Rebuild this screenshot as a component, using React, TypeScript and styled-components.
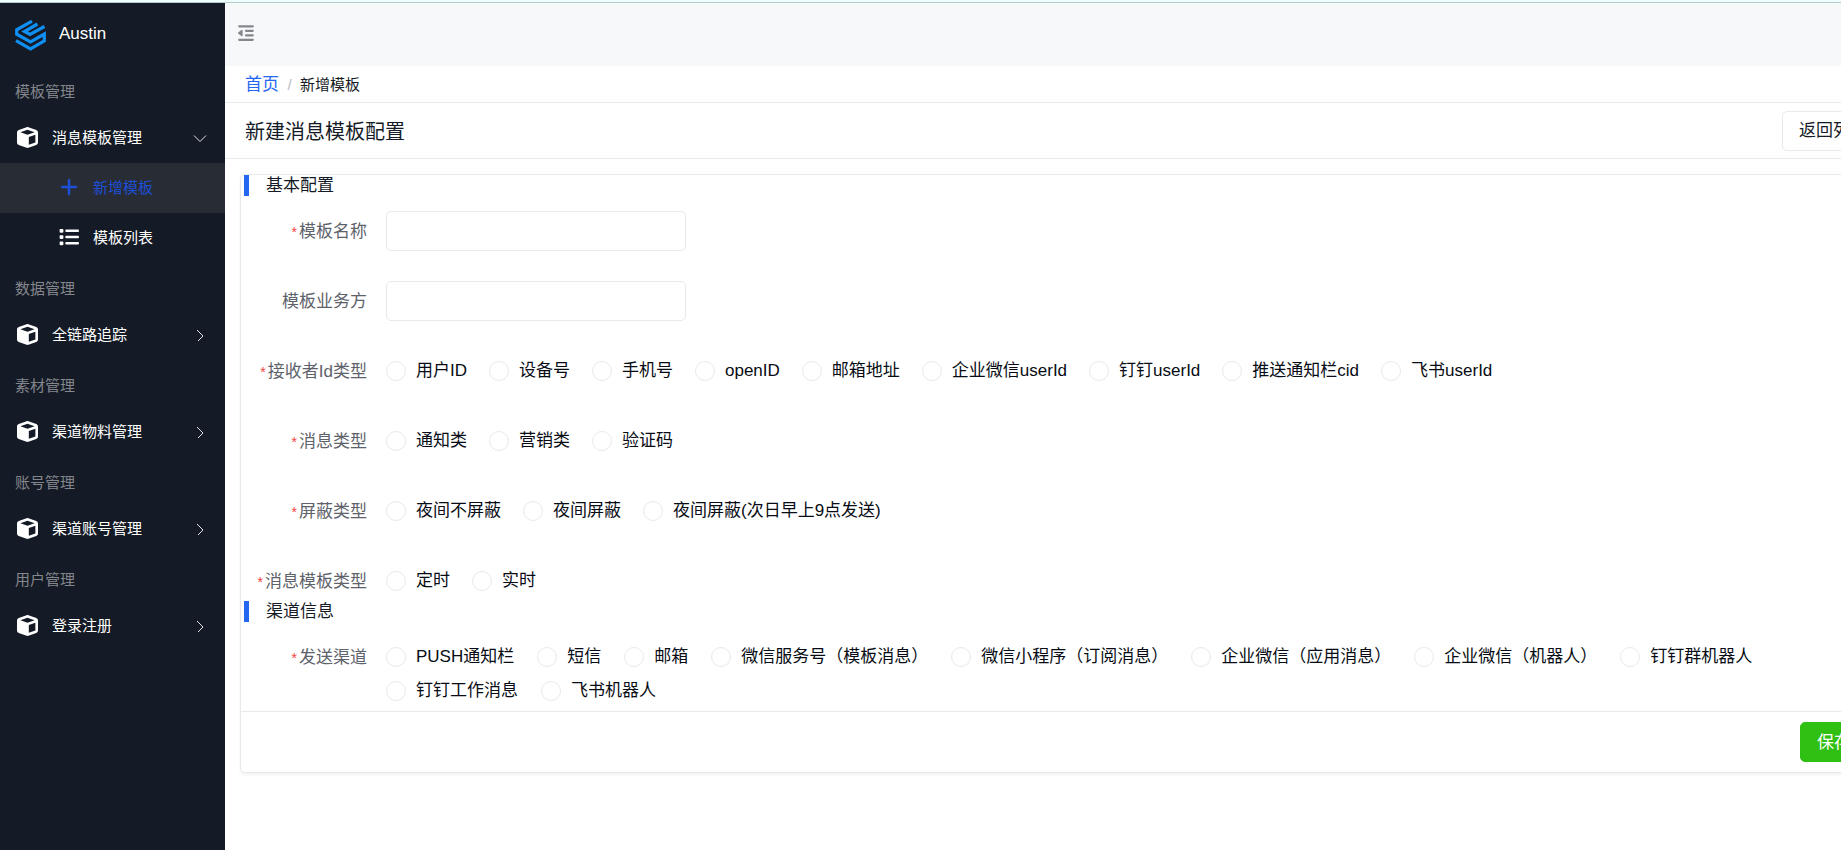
import React from 'react';
import styled, { createGlobalStyle } from 'styled-components';
import { FaCube, FaList, FaOutdent, FaPlus } from 'react-icons/fa6';

const GlobalStyle = createGlobalStyle`
  *, *::before, *::after { box-sizing: border-box; }
  html, body { margin: 0; }
  body {
    background: #fff;
    color: #151b26;
    font: 17px/21px "Liberation Sans", "Noto Sans CJK SC", sans-serif;
    overflow-x: hidden;
  }
  button, input { font: inherit; color: inherit; }
`;

const Page = styled.div`
  display: flex;
  flex-direction: column;
  width: calc(100% + 63px);
  min-height: 100vh;
`;

const TopStrip = styled.div`
  height: 3px;
  background: #effdfd;
  border-bottom: 1px solid #b3cccc;
`;

const Shell = styled.div`
  display: flex;
  flex: 1;
`;

const Sidebar = styled.aside`
  flex: 0 0 225px;
  background: #151b26;
`;

const Brand = styled.div`
  display: flex;
  align-items: center;
  gap: 13px;
  height: 63px;
  padding: 0 15px 2px;
  color: #fff;
  svg { margin-top: 3px; }
`;

const GroupTitle = styled.h2`
  margin: 0;
  height: 47px;
  padding: 0 15px;
  font-size: 15px;
  line-height: 51px;
  font-weight: 400;
  color: #83868c;
`;

const NavButton = styled.button`
  display: flex;
  align-items: center;
  width: 100%;
  height: 50px;
  padding: 0 18px 2px 17px;
  border: 0;
  background: none;
  color: #fff;
  font-size: 15px;
  text-align: left;
  cursor: pointer;
`;

const NavText = styled.span`
  flex: 1;
  margin-left: 14px;
`;

const SubLink = styled.a<{ $active?: boolean }>`
  display: flex;
  align-items: center;
  gap: 14px;
  height: 50px;
  padding: 0 0 2px 59px;
  font-size: 15px;
  text-decoration: none;
  color: ${(p) => (p.$active ? '#1d4fd7' : '#fff')};
  background: ${(p) => (p.$active ? '#282c34' : 'transparent')};
`;

const Main = styled.main`
  flex: 1;
  min-width: 0;
`;

const Header = styled.header`
  display: flex;
  align-items: center;
  height: 63px;
  padding: 0 12px 3px;
  background: #f7f8fa;
`;

const FoldButton = styled.button`
  display: flex;
  padding: 0;
  border: 0;
  background: none;
  color: #84878c;
  cursor: pointer;
`;

const Breadcrumb = styled.nav`
  display: flex;
  align-items: center;
  height: 37px;
  padding: 0 20px;
  border-bottom: 1px solid #e8e9eb;
  font-size: 15px;
  a {
    font-size: 17px;
    color: #2468f2;
    text-decoration: none;
  }
`;

const Slash = styled.span`
  width: 21px;
  text-align: center;
  color: #b8babf;
`;

const TitleBar = styled.div`
  display: flex;
  align-items: center;
  justify-content: space-between;
  height: 56px;
  padding: 0 20px;
  border-bottom: 1px solid #e8e9eb;
`;

const Title = styled.h1`
  margin: 0;
  padding-top: 3px;
  font-size: 20px;
  font-weight: 400;
`;

const Button = styled.button<{ $primary?: boolean }>`
  height: 40px;
  padding: 0 16px;
  border: 1px solid ${(p) => (p.$primary ? '#30bf13' : '#e8e9eb')};
  border-radius: 5px;
  background: ${(p) => (p.$primary ? '#30bf13' : '#fff')};
  color: ${(p) => (p.$primary ? '#fff' : '#151b26')};
  cursor: pointer;
`;

const Card = styled.form`
  margin: 15px;
  border: 1px solid #e8e9eb;
  border-radius: 5px;
  box-shadow: 0 2px 3px rgba(0, 0, 0, 0.05);
`;

const SectionTitle = styled.h2`
  margin: 0 0 15px 3px;
  padding-left: 17px;
  border-left: 5px solid #2468f2;
  font-size: 17px;
  line-height: 21px;
  font-weight: 400;
`;

const Rows = styled.div`
  display: flex;
  flex-direction: column;
  gap: 30px;
`;

const Row = styled.div`
  display: grid;
  grid-template-columns: 126px minmax(0, 1fr);
  column-gap: 19px;
`;

const rowLabel = `
  height: 40px;
  line-height: 42px;
  text-align: right;
  white-space: nowrap;
  color: #5e626a;
`;

const FieldLabel = styled.label`${rowLabel}`;
const GroupLabel = styled.span`${rowLabel}`;

const Star = styled.span`
  margin-right: 2px;
  font-size: 14px;
  color: #f33e3e;
`;

const TextInput = styled.input`
  width: 300px;
  height: 40px;
  padding: 0 12px;
  border: 1px solid #e8e9eb;
  border-radius: 5px;
  background: #fff;
`;

const Options = styled.div<{ $gap: number }>`
  display: flex;
  flex-wrap: wrap;
  column-gap: ${(p) => p.$gap}px;
  padding: 3px 0;
`;

const Option = styled.label`
  display: flex;
  align-items: center;
  gap: 10px;
  height: 34px;
  line-height: 20px;
  white-space: nowrap;
  color: #070c14;
`;

const Radio = styled.input`
  appearance: none;
  width: 20px;
  height: 20px;
  margin: 0;
  border: 1px solid #e8e9eb;
  border-radius: 50%;
  background: #fff;
  &:checked { border: 6px solid #2468f2; }
`;

const CardFooter = styled.footer`
  display: flex;
  justify-content: flex-end;
  padding: 10px 20px;
  border-top: 1px solid #e8e9eb;
`;

const Logo = () => (
  <svg width="31" height="31" viewBox="0 0 31 31" fill="none" stroke="#0f8ff2" strokeWidth="3.200" aria-hidden="true">
    <path d="M17 1.200 1.700 9.800v4.400L15.500 22l13.800-8v6.800l-13.800 8.200L1 20.600" />
    <path d="M22.500 4 9.500 11.500l5.500 3L29.500 6.500" />
  </svg>
);

const Chevron = ({ open }: { open?: boolean }) => (
  <svg width="14" height="14" viewBox="0 0 14 14" fill="none" stroke="#e3e4e6" aria-hidden="true">
    <path d={open ? 'M1 5.500l6 6 6-6' : 'M4 3l6 6-6 6'} />
  </svg>
);

interface NavGroup {
  title: string;
  item: string;
  open?: boolean;
}

const navGroups: NavGroup[] = [
  { title: '模板管理', item: '消息模板管理', open: true },
  { title: '数据管理', item: '全链路追踪' },
  { title: '素材管理', item: '渠道物料管理' },
  { title: '账号管理', item: '渠道账号管理' },
  { title: '用户管理', item: '登录注册' },
];

interface ChoiceGroup {
  label: string;
  name: string;
  options: string[];
  gap?: number;
}

const basicChoices: ChoiceGroup[] = [
  {
    label: '接收者Id类型',
    name: 'idType',
    options: ['用户ID', '设备号', '手机号', 'openID', '邮箱地址', '企业微信userId', '钉钉userId', '推送通知栏cid', '飞书userId'],
  },
  { label: '消息类型', name: 'msgType', options: ['通知类', '营销类', '验证码'] },
  { label: '屏蔽类型', name: 'shieldType', options: ['夜间不屏蔽', '夜间屏蔽', '夜间屏蔽(次日早上9点发送)'] },
  { label: '消息模板类型', name: 'templateType', options: ['定时', '实时'] },
];

const channels: ChoiceGroup = {
  label: '发送渠道',
  name: 'sendChannel',
  options: [
    'PUSH通知栏', '短信', '邮箱', '微信服务号（模板消息）', '微信小程序（订阅消息）',
    '企业微信（应用消息）', '企业微信（机器人）', '钉钉群机器人', '钉钉工作消息', '飞书机器人',
  ],
};

const ChoiceRow = ({ label, name, options, gap = 22 }: ChoiceGroup) => (
  <Row role="radiogroup" aria-labelledby={`${name}-label`}>
    <GroupLabel id={`${name}-label`}><Star>*</Star>{label}</GroupLabel>
    <Options $gap={gap}>
      {options.map((option) => (
        <Option key={option}>
          <Radio type="radio" name={name} value={option} />
          {option}
        </Option>
      ))}
    </Options>
  </Row>
);

export default function App() {
  return (
    <>
      <GlobalStyle />
      <Page>
        <TopStrip />
        <Shell>
          <Sidebar>
            <Brand><Logo />Austin</Brand>
            {navGroups.map((group) => (
              <React.Fragment key={group.title}>
                <GroupTitle>{group.title}</GroupTitle>
                <NavButton type="button" aria-expanded={!!group.open}>
                  <FaCube size={21} />
                  <NavText>{group.item}</NavText>
                  <Chevron open={group.open} />
                </NavButton>
                {group.open && (
                  <>
                    <SubLink href="#add" $active><FaPlus size={20} />新增模板</SubLink>
                    <SubLink href="#list"><FaList size={20} />模板列表</SubLink>
                  </>
                )}
              </React.Fragment>
            ))}
          </Sidebar>
          <Main>
            <Header>
              <FoldButton type="button" aria-label="折叠菜单"><FaOutdent size={18} /></FoldButton>
            </Header>
            <Breadcrumb>
              <a href="#home">首页</a>
              <Slash>/</Slash>
              <span>新增模板</span>
            </Breadcrumb>
            <TitleBar>
              <Title>新建消息模板配置</Title>
              <Button type="button">返回列表</Button>
            </TitleBar>
            <Card>
              <SectionTitle>基本配置</SectionTitle>
              <Rows>
                <Row>
                  <FieldLabel htmlFor="name"><Star>*</Star>模板名称</FieldLabel>
                  <TextInput id="name" type="text" />
                </Row>
                <Row>
                  <FieldLabel htmlFor="proposer">模板业务方</FieldLabel>
                  <TextInput id="proposer" type="text" />
                </Row>
                {basicChoices.map((group) => <ChoiceRow key={group.name} {...group} />)}
              </Rows>
              <SectionTitle>渠道信息</SectionTitle>
              <ChoiceRow {...channels} gap={23} />
              <CardFooter>
                <Button type="submit" $primary>保存</Button>
              </CardFooter>
            </Card>
          </Main>
        </Shell>
      </Page>
    </>
  );
}
